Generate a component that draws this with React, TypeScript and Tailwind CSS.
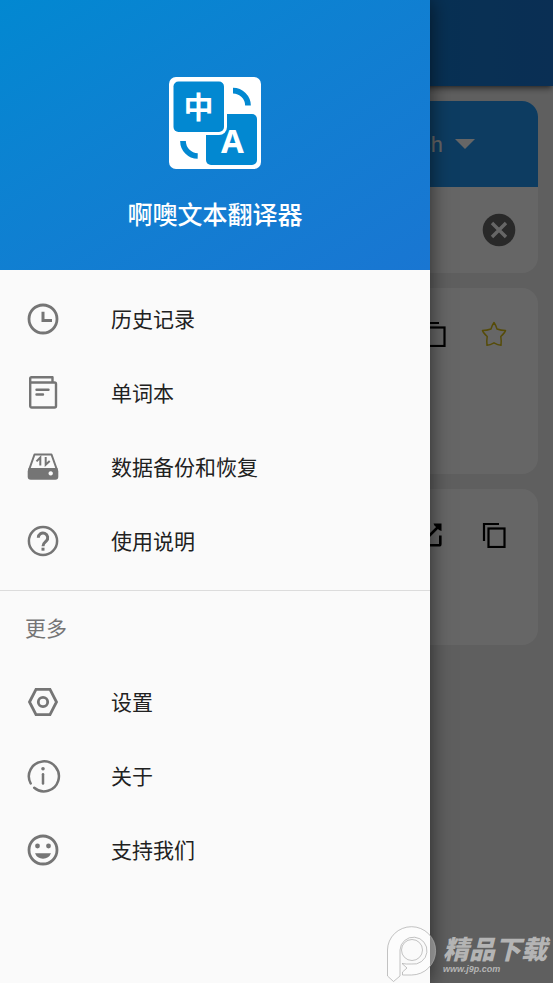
import type { ReactNode } from 'react';

interface IconProps {
  children: ReactNode;
}

interface MenuItem {
  label: string;
  icon: ReactNode;
}

// Menu icons are drawn around the origin so they stay centered
const MenuIcon = ({ children }: IconProps) => (
  <svg
    viewBox="-18 -18 36 36"
    className="size-9 shrink-0 text-[#757575]"
    fill="none"
    stroke="currentColor"
    strokeWidth="2.8"
    aria-hidden="true"
  >
    {children}
  </svg>
);

const mainItems: MenuItem[] = [
  {
    label: '历史记录',
    icon: (
      <MenuIcon>
        <circle r="14" />
        <path d="M0-7.3V1.6H9" strokeWidth="3" />
      </MenuIcon>
    ),
  },
  {
    label: '单词本',
    icon: (
      <MenuIcon>
        <g strokeWidth="2.4" strokeLinejoin="round" strokeLinecap="round">
          <path d="M-12.8-10.3V13a1.5 1.5 0 0 0 1.5 1.5H11.5a1.5 1.5 0 0 0 1.5-1.5V-9a1.5 1.5 0 0 0-1.5-1.5H-12.8V-14.5a1.3 1.3 0 0 1 1.3-1.3H9.5V-10.5" />
          <path d="M-6.5-3.3H5.5M-6.500 1.5H0" />
        </g>
      </MenuIcon>
    ),
  },
  {
    label: '数据备份和恢复',
    icon: (
      <MenuIcon>
        <path d="M-14 3-8.5-12.5H8.5L14 3" strokeWidth="2" strokeLinejoin="round" />
        <path
          d="M-14.3 1H14.3L15.3 4V9.8a3 3 0 0 1-3 3H-12.3a3 3 0 0 1-3-3V4ZM7.700 4.2a2.2 2.2 0 1 0 .01 0Z"
          fill="currentColor"
          fillRule="evenodd"
          stroke="none"
        />
        <path d="M-6.5-5.6-2.7-9.5V-1.500M2.7-10V-2.3L6.700-6" strokeWidth="2" />
      </MenuIcon>
    ),
  },
  {
    label: '使用说明',
    icon: (
      <MenuIcon>
        <circle r="14.1" strokeWidth="2.5" />
        <path d="M-4.7-3.3a4.700 4.700 0 1 1 8 3.3C1.500 1.700 0 2.300 0 5.300" strokeWidth="3" />
        <path d="M0 6.700V9.700" strokeWidth="3" />
      </MenuIcon>
    ),
  },
];

const moreItems: MenuItem[] = [
  {
    label: '设置',
    icon: (
      <MenuIcon>
        <path d="M-13.5 0-7-12.6H7L13.5 0 7 12.6H-7Z" />
        <circle r="4.7" />
      </MenuIcon>
    ),
  },
  {
    label: '关于',
    icon: (
      <MenuIcon>
        <g strokeLinecap="round" strokeWidth="2.5">
          <path d="M-12.3 7.5A15 15 0 1 1-8.800 11.800" />
          <path d="M0-1.800V7.500" />
        </g>
        <circle cy="-7.300" r="1.800" fill="currentColor" stroke="none" />
      </MenuIcon>
    ),
  },
  {
    label: '支持我们',
    icon: (
      <MenuIcon>
        <circle r="14" />
        <g fill="currentColor" stroke="none">
          <circle cx="-5.5" cy="-4" r="2.4" />
          <circle cx="5.5" cy="-4" r="2.4" />
          <path d="M-8 3.200H8A8.600 8.600 0 0 1-8 3.200Z" />
        </g>
      </MenuIcon>
    ),
  },
];

const MenuList = ({ items }: { items: MenuItem[] }) => (
  <ul>
    {items.map((item) => (
      <li key={item.label}>
        <button type="button" className="flex h-[74px] w-full items-center gap-[50px] px-[25px] text-left">
          {item.icon}
          <span>{item.label}</span>
        </button>
      </li>
    ))}
  </ul>
);

const AppLogo = () => (
  <svg viewBox="0 0 92 92" className="size-[92px]" aria-hidden="true">
    <rect width="92" height="92" rx="7" fill="#fff" />
    <rect x="37" y="37" width="51" height="51" rx="5" fill="#0288d1" />
    <rect x="1.5" y="1.5" width="56.5" height="56.5" rx="8" fill="#fff" />
    <rect x="4.5" y="4.5" width="50.5" height="50.5" rx="5" fill="#0288d1" />
    <path d="M64 13.7A15 15 0 0 1 79 28.500M14 64A15 15 0 0 0 28.700 79" fill="none" stroke="#0288d1" strokeWidth="5.7" />
    <text x="29.5" y="41" textAnchor="middle" fill="#fff" className="font-['Noto_Sans_CJK_SC',sans-serif] text-[30px] font-bold">
      中
    </text>
    <text x="63.5" y="76" textAnchor="middle" fill="#fff" className="font-['Noto_Sans',sans-serif] text-[33px] font-bold">
      A
    </text>
  </svg>
);

const CopyIcon = () => (
  <svg viewBox="0 0 24 26" className="h-[26px] w-6" fill="none" stroke="#000" strokeWidth="2.2" aria-hidden="true">
    <path d="M2 19V2H17" />
    <rect x="6.5" y="6.5" width="16" height="18.5" />
  </svg>
);

const ShareIcon = () => (
  <svg viewBox="0 0 24 24" className="size-6" fill="none" stroke="#000" strokeWidth="2.6" aria-hidden="true">
    <path d="M11 2H2V22.2H21a1.300 1.300 0 0 0 1.300-1.300V12.500M21 3 9 15" />
    <path d="M15.500.5H23.500V8L21 7 16.500 2.500Z" fill="#000" stroke="none" />
  </svg>
);

const StarIcon = () => (
  <svg viewBox="0 0 26 26" className="size-[26px]" fill="none" stroke="#d6bc14" strokeWidth="1.5" strokeLinejoin="round" aria-hidden="true">
    <path d="M13 1.500Q14.500 3.500 16 8 20 9.500 24.500 9.500 24 11.500 19.800 15.500 20.500 20 20 24.300 17 24 13 21.800 9 24 6 24.300 5.500 20 6.200 15.500 2 11.500 1.500 9.500 6 9.500 10 8 11.500 3.500 13 1.500Z" />
  </svg>
);

const Translator = () => (
  <main>
    <header className="h-[86px] bg-gradient-to-r from-[#0288d1] to-[#1976d2] shadow-md shadow-black/40" />
    <div className="flex flex-col gap-[15px] p-[15px]">
      <section className="overflow-hidden rounded-2xl bg-white">
        <div className="flex h-[86px] items-center justify-end gap-3 bg-[#2196f3] pr-[63px]">
          <select aria-label="目标语言" className="appearance-none bg-transparent text-right text-[22px] text-white">
            <option>English</option>
          </select>
          <svg viewBox="0 0 20 10" className="h-2.5 w-5" fill="#fff" aria-hidden="true">
            <path d="M0 0H20L10 10Z" />
          </svg>
        </div>
        <div className="flex h-[86px] items-center justify-end pr-[22px]">
          <button type="button" aria-label="清空">
            <svg viewBox="0 0 34 34" className="size-[34px]" aria-hidden="true">
              <circle cx="17" cy="17" r="16.3" fill="#666" />
              <path d="M10 10 24 24M24 10 10 24" stroke="#fff" strokeWidth="3.4" />
            </svg>
          </button>
        </div>
      </section>

      <section className="flex min-h-[186px] items-start justify-end gap-5 rounded-2xl bg-white px-6 py-[26px]">
        <button type="button" aria-label="复制" className="flex size-10 items-center justify-center">
          <CopyIcon />
        </button>
        <button type="button" aria-label="收藏" className="flex size-10 items-center justify-center">
          <StarIcon />
        </button>
      </section>

      <section className="flex min-h-[156px] items-start justify-end gap-6 rounded-2xl bg-white px-6 py-[26px]">
        <button type="button" aria-label="分享" className="flex size-10 items-center justify-center">
          <ShareIcon />
        </button>
        <button type="button" aria-label="复制译文" className="flex size-10 items-center justify-center">
          <CopyIcon />
        </button>
      </section>
    </div>
  </main>
);

const Watermark = () => (
  <div className="pointer-events-none absolute right-1.5 bottom-0 flex items-center gap-1.5">
    <svg viewBox="0 0 50 57" className="h-[57px] w-[50px]" fill="#fff" fillOpacity="0.35" stroke="#aaa" strokeOpacity="0.7" aria-hidden="true">
      <path d="M.5 24A24 23.500 0 0 1 24.500.7 24 24 0 0 1 24.500 49H15.500V46L20 42 15 37.500Q19 38.300 24.300 38A13.500 13.500 0 1 0 13 24V50L6.500 55.500.5 50Z" />
      <circle cx="25" cy="24" r="10.5" fill="none" />
    </svg>
    <div className="flex flex-col items-start text-[#b4b4b4] italic">
      <span className="font-['Liberation_Sans','Noto_Sans_CJK_SC',sans-serif] text-[26px] leading-7 font-black">精品下载</span>
      <span className="font-['Liberation_Sans',sans-serif] text-[9px] leading-[10px] font-bold">www.j9p.com</span>
    </div>
  </div>
);

const App = () => {
  return (
    <div className="relative min-h-screen overflow-hidden bg-[#eeeeee] font-[Roboto,'Noto_Sans_CJK_SC',sans-serif]">
      <Translator />

      <div className="absolute inset-0 bg-black/60" />

      {/* Navigation drawer */}
      <aside className="absolute inset-y-0 left-0 w-[430px] max-w-[85%] bg-[#fafafa] font-['Noto_Sans_CJK_SC',sans-serif] shadow-[0_0_20px_rgba(0,0,0,0.6)]">
        <div className="flex h-[270px] flex-col items-center bg-gradient-to-br from-[#0288d1] to-[#1976d2] pt-[77px]">
          <AppLogo />
          <h1 className="mt-7 text-[25px] leading-8 font-medium text-white">啊噢文本翻译器</h1>
        </div>

        <nav className="text-[21px] text-[#212121]">
          <div className="border-b border-[#dcdcdc] pt-3 pb-3">
            <MenuList items={mainItems} />
          </div>
          <h2 className="flex h-[74px] items-center px-[25px] text-[#757575]">更多</h2>
          <MenuList items={moreItems} />
        </nav>
      </aside>

      <Watermark />
    </div>
  );
};

export default App;
